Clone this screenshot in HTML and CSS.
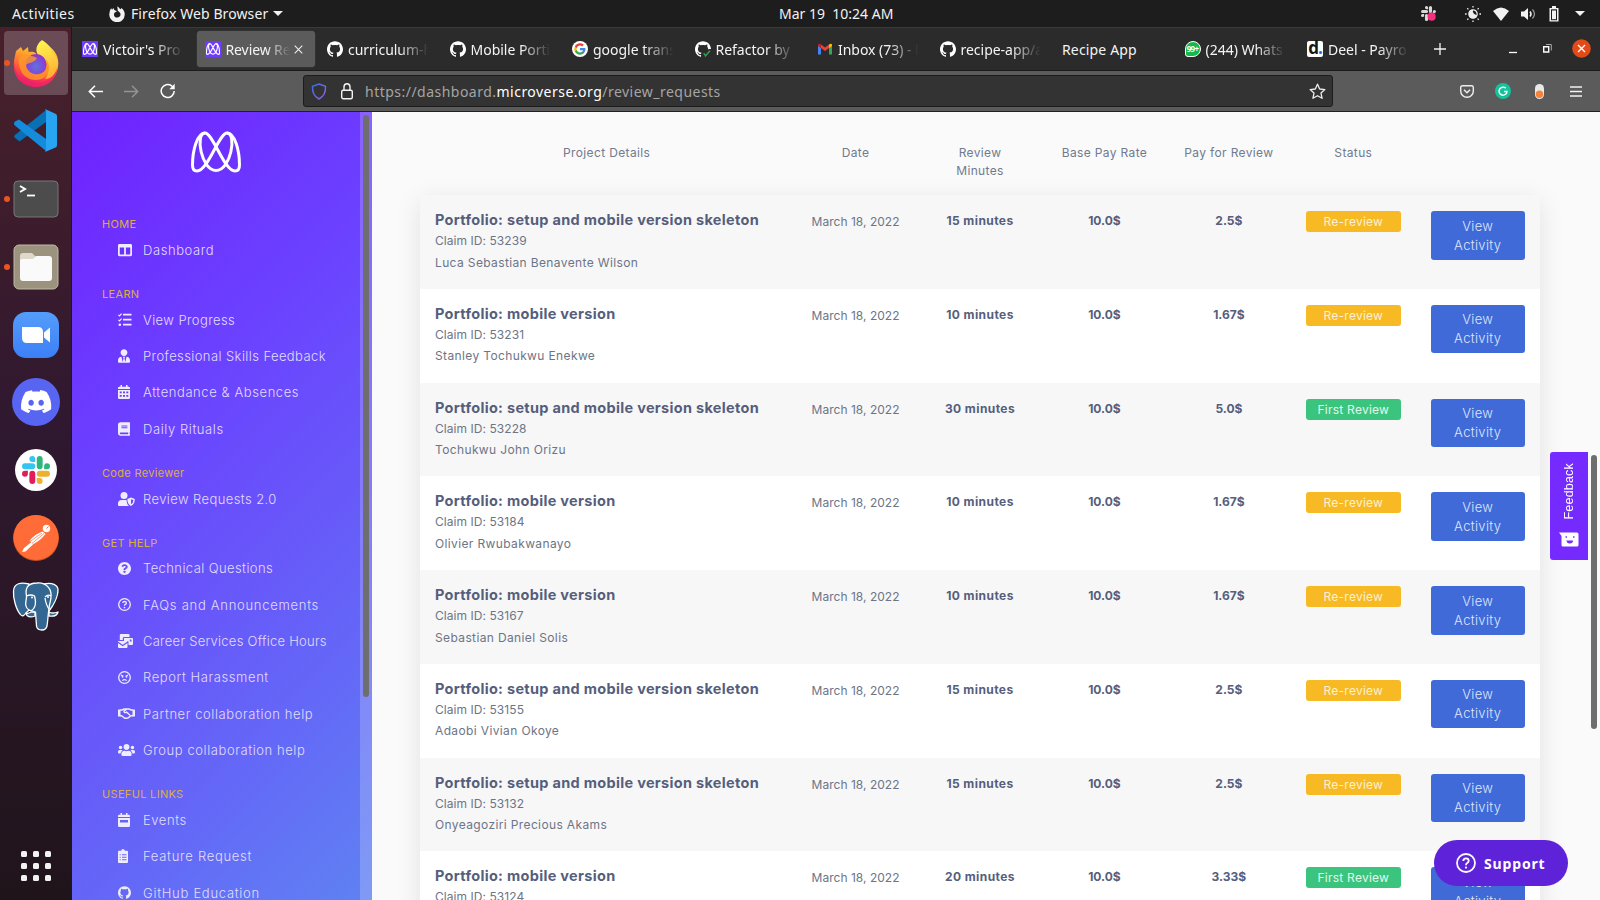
FILE: index.html
```html
<!DOCTYPE html>
<html lang="en">
<head>
<meta charset="utf-8">
<title>Review Requests</title>
<link rel="stylesheet" href="styles.css">
</head>
<body>
<svg class="defs" width="0" height="0">
  <defs>
    <linearGradient id="ffBody" x1="0.7" y1="0" x2="0.4" y2="1"><stop offset="0" stop-color="#fff04a"/><stop offset=".35" stop-color="#ffa62b"/><stop offset=".7" stop-color="#ff4f3d"/><stop offset="1" stop-color="#e4117a"/></linearGradient>
    <linearGradient id="ffFlame" x1="0.5" y1="0" x2="0.7" y2="1"><stop offset="0" stop-color="#fff44f"/><stop offset="1" stop-color="#ffa930"/></linearGradient>
    <radialGradient id="ffGlobe" cx=".5" cy=".6" r=".6"><stop offset="0" stop-color="#6173df"/><stop offset="1" stop-color="#8f31d4"/></radialGradient>
    <linearGradient id="zoomBg" x1="0" y1="0" x2="0" y2="1"><stop offset="0" stop-color="#559dfb"/><stop offset="1" stop-color="#3c7ff6"/></linearGradient>
    <linearGradient id="shieldLine" x1="0" y1="0" x2="1" y2="1"><stop offset="0" stop-color="#3b6fe0"/><stop offset="1" stop-color="#8b62ea"/></linearGradient>
    <symbol id="github" viewBox="0 0 24 24"><path d="M12 .297c-6.63 0-12 5.373-12 12 0 5.303 3.438 9.8 8.205 11.385.6.113.82-.258.82-.577 0-.285-.01-1.04-.015-2.04-3.338.724-4.042-1.61-4.042-1.61C4.422 18.07 3.633 17.7 3.633 17.7c-1.087-.744.084-.729.084-.729 1.205.084 1.838 1.236 1.838 1.236 1.07 1.835 2.809 1.305 3.495.998.108-.776.417-1.305.76-1.605-2.665-.3-5.466-1.332-5.466-5.93 0-1.31.465-2.38 1.235-3.22-.135-.303-.54-1.523.105-3.176 0 0 1.005-.322 3.3 1.23.96-.267 1.98-.399 3-.405 1.02.006 2.04.138 3 .405 2.28-1.552 3.285-1.23 3.285-1.23.645 1.653.24 2.873.12 3.176.765.84 1.23 1.91 1.23 3.22 0 4.61-2.805 5.625-5.475 5.92.42.36.81 1.096.81 2.22 0 1.606-.015 2.896-.015 3.286 0 .315.21.69.825.57C20.565 22.092 24 17.592 24 12.297c0-6.627-5.373-12-12-12"/></symbol>
    <symbol id="mv" viewBox="0 0 50 42"><g fill="none" stroke="#fff"><path d="M1.5 34C1.5 20 6 2 14 2C22 2 33 40 44 40C47.500 40 48.500 38 48.500 34C48.500 20 44 2 36 2C28 2 17 40 6 40C2.500 40 1.500 38 1.500 34Z"/><path d="M14 2C4 2 10 39.500 25 39.500C40 39.500 46 2 36 2"/></g></symbol>
    <symbol id="slackmark" viewBox="0 0 24 24"><g id="slackleg"><path d="M5.042 15.165a2.528 2.528 0 0 1-2.52 2.523A2.528 2.528 0 0 1 0 15.165a2.527 2.527 0 0 1 2.522-2.52h2.52v2.52zM6.313 15.165a2.527 2.527 0 0 1 2.521-2.52 2.527 2.527 0 0 1 2.521 2.52v6.313A2.528 2.528 0 0 1 8.834 24a2.528 2.528 0 0 1-2.521-2.522v-6.313z"/></g></symbol>
  </defs>
</svg>

<header class="topbar">
  <span class="activities">Activities</span>
  <span class="appmenu">
    <svg width="16" height="16" viewBox="0 0 16 16"><path fill="#f2f2f2" fill-rule="evenodd" d="M8 0.300C9.500 1.200 10.500 2 11 3.200C12 2.800 12.300 2.500 12.500 2C15 4 15.800 6 15.700 8.500A7.700 7.500 0 1 1 .5 7C.6 5 1.200 3.500 2.200 2.200L3 3.800L4.500 2L5.300 4L8 5.300L5.500 6.800C4 9.500 6 11.800 8.200 11.600C10.800 11.400 12 9.500 11.300 7.300C10.600 5.500 8.500 5 8.600 3.600C8.600 2.200 8.500 1.500 8 .3Z"/></svg>
    <b class="appname">Firefox Web Browser</b><i class="caret"></i>
  </span>
  <span class="clock">Mar 19&nbsp; 10:24 AM</span>
  <span class="tray">
    <svg class="t-slack" width="15" height="15" viewBox="0 0 24 24"><g fill="#d8d8d8"><use href="#slackleg"/><use href="#slackleg" transform="rotate(90 12 12)"/><use href="#slackleg" transform="rotate(180 12 12)"/></g><circle cx="17" cy="17" r="6.500" fill="#f5317f"/></svg>
    <svg width="16" height="16" viewBox="0 0 16 16"><circle cx="8" cy="8" r="4.200" fill="none" stroke="#eee" stroke-width="1.200"/><path d="M8 3.800A4.200 4.200 0 1 0 12.200 9A4 4 0 0 1 8 3.800Z" fill="#eee"/><path d="M8 0v1.600M8 14.400V16M0 8h1.600M14.400 8H16M2.300 2.300l1.100 1.100M12.600 12.600l1.100 1.100M2.300 13.700l1.100-1.100M12.600 3.400l1.100-1.100" stroke="#eee" stroke-width="1.300"/></svg>
    <svg width="16" height="14" viewBox="0 0 16 14"><path d="M0 4Q8-3 16 4L8 14Z" fill="#f2f2f2"/></svg>
    <svg width="16" height="14" viewBox="0 0 16 14"><path d="M0 4.500h3L7 1v12L3 9.500H0Z" fill="#f2f2f2"/><path d="M9 4.500q2 2.500 0 5" fill="none" stroke="#f2f2f2" stroke-width="1.500"/><path d="M11.500 2.500q4 4.500 0 9" fill="none" stroke="#999" stroke-width="1.300"/></svg>
    <svg width="10" height="16" viewBox="0 0 10 16"><path d="M3 0h4v2h2.500v13.500H.5V2H3Z" fill="#f2f2f2"/><path d="M2 3.300h6v10.900H2Z" fill="#1d1d1d"/><path d="M3 4.500h4v8.700H3Z" fill="#f2f2f2"/></svg>
    <i class="caret"></i>
  </span>
</header>

<div class="desktop">
<nav class="dock">
  <div class="app active running">
    <svg width="46" height="48" viewBox="0 0 46 48"><path fill="url(#ffBody)" d="M3 12C5 11 6 9 8 8L10 12L15 8L15.500 13C21 12 24 14 24 17L28 14C30 8 28 6 30 2C36 6 42 12 44 17C47 25 45 36 37 43C28 50 15 49 7 42C0 35 0 24 2 17Z"/><path fill="url(#ffFlame)" d="M29 1C36 6 38 10 39 14C42 15 44 20 45 22C46 30 41 40 32 40C37 34 37 22 29 19C22 16 21 7 29 1Z"/><circle cx="23" cy="25.500" r="10.500" fill="url(#ffGlobe)"/><path fill="#ff9a28" d="M6 18C12 16 18 16 24 19C22 24 16 23 13 26C14 32 19 36 26 35C34 34 35 26 33 20C40 29 35 41 23 41C11 41 4 30 6 18Z" opacity=".8"/><path d="M1 23C2 40 14 44 24 44C34 44 42 37 44 29C43 43 32 48 23 48C10 48 0 38 1 23Z" fill="#f02367" opacity=".75"/></svg>
  </div>
  <div class="app"><svg width="43" height="43" viewBox="0 0 43 43"><path fill="#0b6fb5" d="M0 28L5.500 32.500L32 13V1L1 26Q0 27 0 28Z"/><path fill="#148bdb" d="M0 15Q0 13 1 12.500L5 10.500L32 30V42L1.500 17Q0 16 0 15Z"/><path fill="#27a4f2" d="M31 0L42 5Q43 6 43 7V36Q43 38 41.500 38.500L31 43Q32 42 32 40V3Q32 1 31 0Z"/></svg></div>
  <div class="app running"><svg width="46" height="38" viewBox="0 0 46 38"><rect x="1" y="1" width="44" height="36" rx="4" fill="#4c4c4c" stroke="#777"/><path d="M7 6l5 3-5 3" fill="none" stroke="#fff" stroke-width="2"/><path d="M14 15.500h8" stroke="#fff" stroke-width="1.800"/></svg></div>
  <div class="app running"><svg width="46" height="46" viewBox="0 0 46 46"><rect x="1" y="1" width="44" height="44" rx="5" fill="#9b937e" stroke="#c0b9a5"/><path d="M7 18V12Q7 9 10 9H19L23 13V18Z" fill="#ddd8ca"/><path d="M7 17Q7 15 9 15H20L23 12H36Q39 12 39 15V34Q39 37 36 37H10Q7 37 7 34Z" fill="#fafafa"/></svg></div>
  <div class="app"><svg width="46" height="46" viewBox="0 0 46 46"><rect width="46" height="46" rx="13" fill="url(#zoomBg)"/><path d="M9 15H25Q30 15 30 20V31H14Q9 31 9 26ZM31 20.500L37 15.500V30.500L31 25.500Z" fill="#fff"/></svg></div>
  <div class="app"><svg width="48" height="48" viewBox="0 0 48 48"><circle cx="24" cy="24" r="24" fill="#5765f2"/><g transform="translate(9 8.500) scale(1.260)" fill="#fff"><path d="M20.317 4.370a19.800 19.800 0 00-4.885-1.515c-.3.400-.55.900-.687 1.287-1.845-.276-3.680-.276-5.487 0-.164-.393-.406-.874-.618-1.250a19.700 19.700 0 00-5.043 1.478C.533 9.046-.319 13.580.099 18.058c2.053 1.508 4.041 2.480 6.108 3.058.462-.63.873-1.295 1.226-1.994-.694-.3-1.316-.6-1.914-.998l.444-.421c3.928 1.793 8.180 1.793 12.139 0l.444.421c-.6.400-1.220.7-1.914 1 .36.697.772 1.362 1.225 1.992 1.961-.578 4.034-1.500 6.087-3.008.5-5.177-.838-9.724-3.627-13.738zM8.020 15.331c-1.183 0-2.157-1.086-2.157-2.419s.956-2.419 2.157-2.419c1.211 0 2.176 1.095 2.157 2.419 0 1.333-.956 2.419-2.157 2.419zm7.975 0c-1.183 0-2.157-1.086-2.157-2.419s.955-2.419 2.157-2.419c1.211 0 2.176 1.095 2.157 2.419 0 1.333-.946 2.419-2.157 2.419Z"/></g></svg></div>
  <div class="app"><svg width="42" height="42" viewBox="0 0 42 42"><circle cx="21" cy="21" r="21" fill="#fff"/><g transform="translate(7 7) scale(1.167)"><use href="#slackleg" fill="#e01e5a"/><use href="#slackleg" fill="#36c5f0" transform="rotate(90 12 12)"/><use href="#slackleg" fill="#2eb67d" transform="rotate(180 12 12)"/><use href="#slackleg" fill="#ecb22e" transform="rotate(270 12 12)"/></g></svg></div>
  <div class="app"><svg width="46" height="46" viewBox="0 0 46 46"><circle cx="23" cy="23" r="23" fill="#c9501f"/><circle cx="23" cy="22.500" r="22.500" fill="#ff6c37"/><circle cx="33.500" cy="13.500" r="3.700" fill="#fff"/><path d="M29.500 16.500L32.500 19Q28 25 20.500 29L12.500 36.500L9 37L11 33L18.500 27L16.500 26Q21 19.500 29.500 16.500Z" fill="#fff"/><path d="M29 18L17 26.500M31 18.500L19 28.500" stroke="#ff6c37" stroke-width=".7"/><path d="M33.500 13.500l2-2" stroke="#ff6c37"/></svg></div>
  <div class="app"><svg width="48" height="50" viewBox="0 0 48 50"><g fill="#336791" stroke="#fff" stroke-width="1.300" stroke-linejoin="round"><path d="M17 3C9 1 2 2 1.500 10C1 17 4 28 8 33C10 36 12 35 14 32L18 28V6Z"/><path d="M32 3C40 1 46 4 46 9C46 16 41 25 37 30L33 24Z"/><path d="M14 32Q16 33 19 31L23 31V35Q18 37 15 34.500Z"/><path d="M37 31Q40 33 46 31Q45 36 37 35Z"/><path d="M17 29C11 25 15 19 14.500 15C13 8 15 2 25 2C34 1 40 8 39 16C39 20 37 23 37 28C36 33 36 39 35 45Q34 49 30 49Q25 49 24.500 45L23.500 31Z"/><path d="M14.500 15Q19 13 22.500 15Q24.500 22 22.500 26Q20 31 17 29M33 16Q36 13 39 15M33 17Q34 24 37 28" fill="none"/></g><circle cx="20" cy="16.500" r="1" fill="#fff"/><circle cx="36" cy="16" r="1" fill="#fff"/></svg></div>
  <div class="grid9"><i></i><i></i><i></i><i></i><i></i><i></i><i></i><i></i><i></i></div>
</nav>

<main class="browser">
  <div class="tabs">
    <div class="tab"><span class="mvico"><svg width="14" height="12"><use href="#mv"/></svg></span><span class="label">Victoir's Pro</span></div>
    <div class="tab current"><span class="mvico"><svg width="14" height="12"><use href="#mv"/></svg></span><span class="label">Review Re</span><svg class="x" width="9" height="9" viewBox="0 0 9 9"><path d="M.7.7l7.600 7.600M8.300.7L.7 8.300" stroke="#eee" stroke-width="1.100"/></svg></div>
    <div class="tab"><svg width="16" height="16" fill="#fff"><use href="#github"/></svg><span class="label">curriculum-h</span></div>
    <div class="tab"><svg width="16" height="16" fill="#fff"><use href="#github"/></svg><span class="label">Mobile Porti</span></div>
    <div class="tab"><svg width="16" height="16" viewBox="0 0 24 24"><circle cx="12" cy="12" r="12" fill="#fff"/><g transform="translate(2.600 2.600) scale(.78)"><path fill="#4285f4" d="M22.560 12.250c0-.78-.07-1.530-.2-2.250H12v4.260h5.920c-.26 1.370-1.040 2.530-2.210 3.310v2.770h3.570c2.080-1.920 3.280-4.740 3.280-8.090z"/><path fill="#34a853" d="M12 23c2.970 0 5.460-.98 7.280-2.660l-3.570-2.770c-.98.66-2.230 1.060-3.710 1.060-2.860 0-5.290-1.930-6.160-4.530H2.180v2.840C3.990 20.530 7.700 23 12 23z"/><path fill="#fbbc05" d="M5.840 14.090c-.22-.66-.35-1.360-.35-2.090s.13-1.430.35-2.090V7.070H2.180C1.430 8.550 1 10.220 1 12s.43 3.450 1.180 4.930l2.850-2.220.81-.62z"/><path fill="#ea4335" d="M12 5.380c1.620 0 3.060.56 4.210 1.640l3.150-3.150C17.450 2.090 14.970 1 12 1 7.700 1 3.990 3.470 2.180 7.070l3.660 2.840c.87-2.600 3.300-4.530 6.160-4.530z"/></g></svg><span class="label">google trans</span></div>
    <div class="tab"><svg width="16" height="16" viewBox="0 0 24 24"><use href="#github" width="24" height="24" fill="#fff"/><path d="M11 17l5 7h8V12h-3Z" fill="#2b2b2b"/><path d="M13 18.500l3 3.500 6.500-7.500" fill="none" stroke="#2da44e" stroke-width="2.200"/></svg><span class="label">Refactor by</span></div>
    <div class="tab"><svg width="16" height="16" viewBox="0 0 16 16"><path d="M1 13.500V4.500l3 2.200v6.800Z" fill="#4285f4"/><path d="M15 13.500V4.500l-3 2.200v6.800Z" fill="#34a853"/><path d="M4 3.500l4 3 4-3v3.600l-4 3-4-3Z" fill="#ea4335"/><path d="M1 5V3.500Q2 1.800 4 3.500v3.700Z" fill="#c5221f"/><path d="M15 5V3.500Q14 1.800 12 3.500v3.700Z" fill="#fbbc04"/></svg><span class="label">Inbox (73) - l</span></div>
    <div class="tab"><svg width="16" height="16" fill="#fff"><use href="#github"/></svg><span class="label">recipe-app/a</span></div>
    <div class="tab"><span class="label">Recipe App</span></div>
    <div class="tab"><span class="wa">99+</span><span class="label">(244) Whats</span></div>
    <div class="tab"><span class="deel">d<i>.</i></span><span class="label">Deel - Payro</span></div>
    <svg class="plus" width="12" height="12" viewBox="0 0 12 12"><path d="M6 0v12M0 6h12" stroke="#f4f4f4" stroke-width="1.300"/></svg>
    <div class="winctl">
      <svg width="8" height="10" viewBox="0 0 8 10"><path d="M0 8.500h8" stroke="#fff" stroke-width="1.300"/></svg>
      <svg width="9" height="9" viewBox="0 0 9 9"><path d="M.7 2.700h5v5.300h-5Z" fill="none" stroke="#fff" stroke-width="1.400"/><path d="M3 .5h5.300v6" fill="none" stroke="#aaa"/></svg>
      <svg width="19" height="19" viewBox="0 0 19 19"><circle cx="9.500" cy="9.500" r="9.300" fill="#e44a17"/><path d="M6 6l7 7M13 6l-7 7" stroke="#fff" stroke-width="1.400"/></svg>
    </div>
  </div>
  <div class="toolbar">
    <div class="navbtns">
      <svg width="15" height="13" viewBox="0 0 15 13"><path d="M7 .8L1.300 6.500 7 12.200M1.300 6.500H15" fill="none" stroke="#fff" stroke-width="1.500"/></svg>
      <svg width="15" height="13" viewBox="0 0 15 13"><path d="M8 .8l5.700 5.700L8 12.200M13.700 6.500H0" fill="none" stroke="#949494" stroke-width="1.500"/></svg>
      <svg width="16" height="16" viewBox="0 0 16 16"><path d="M14.200 8A6.500 6.500 0 1 1 11.600 2.800L13 4" fill="none" stroke="#fff" stroke-width="1.500"/><path d="M14.700.8v5.400H9.300Z" fill="#fff"/></svg>
    </div>
    <div class="urlbar">
      <svg width="16" height="17" viewBox="0 0 16 17"><path d="M8 1L14.500 3.400C14.800 9 13 13.500 8 16C3 13.500 1.200 9 1.500 3.400Z" fill="none" stroke="url(#shieldLine)" stroke-width="1.500"/></svg>
      <svg class="lock" width="12" height="17" viewBox="0 0 12 17"><rect x=".7" y="7.200" width="10.600" height="8.600" rx="1.500" fill="none" stroke="#f4f4f4" stroke-width="1.400"/><path d="M3 7V4Q3 .8 6 .8T9 4v3" fill="none" stroke="#f4f4f4" stroke-width="1.400"/></svg>
      <span class="url">https://dashboard.<b>microverse.org</b>/review_requests</span>
      <svg class="star" width="17" height="17" viewBox="0 0 17 17"><path d="M8.500 1.200l2.200 4.800 5.200.6-3.900 3.500 1.100 5.200-4.600-2.600-4.600 2.600L5 10.100 1.100 6.600l5.200-.6Z" fill="none" stroke="#eee" stroke-width="1.300" stroke-linejoin="round"/></svg>
    </div>
    <div class="exts">
      <svg width="14" height="13" viewBox="0 0 14 13"><path d="M2.500.8h9Q13.300.8 13.300 2.500V6A6.300 6.300 0 0 1 .7 6V2.500Q.7.8 2.500.8Z" fill="none" stroke="#eee" stroke-width="1.400"/><path d="M4 4.700l3 3 3-3" fill="none" stroke="#eee" stroke-width="1.500"/></svg>
      <svg width="16" height="16" viewBox="0 0 16 16"><circle cx="8" cy="8" r="8" fill="#15c39a"/><path d="M10.800 5.300A4 4 0 1 0 12 8.500H9" fill="none" stroke="#fff" stroke-width="1.400"/></svg>
      <svg width="9" height="15" viewBox="0 0 9 15"><rect width="9" height="15" rx="4.500" fill="#e9e9e9"/><circle cx="4.500" cy="10.300" r="3.700" fill="#f5833a"/></svg>
      <svg width="12" height="11" viewBox="0 0 12 11"><path d="M0 1h12M0 5.500h12M0 10h12" stroke="#f2f2f2" stroke-width="1.300"/></svg>
    </div>
  </div>

  <div class="page">
    <aside class="sidebar">
      <div class="menu">
        <svg class="logo" width="50" height="42"><use href="#mv"/></svg>
        <section><h4>HOME</h4>
          <a><svg width="14" height="14" viewBox="0 0 512 512"><path d="M464 32H48C21.490 32 0 53.490 0 80v352c0 26.510 21.490 48 48 48h416c26.510 0 48-21.490 48-48V80c0-26.510-21.490-48-48-48zM224 416H64V160h160v256zm224 0H288V160h160v256z"/></svg>Dashboard</a></section>
        <section><h4>LEARN</h4>
          <a class="snug"><svg width="14" height="14" viewBox="0 0 14 14"><path d="M5 1.700h8.500M5 6.700h8.500M5 11.700h8.500" stroke="#f0ecff" stroke-width="1.700"/><path d="M.4 1.900l1.100 1L3.600.6M.4 6.900l1.100 1 2.100-2.300" fill="none" stroke="#f0ecff" stroke-width="1.200"/><circle cx="1.800" cy="11.700" r="1.300"/></svg>View Progress</a>
          <a class="snug"><svg width="12" height="14" viewBox="0 0 448 512"><path d="M224 256c70.700 0 128-57.300 128-128S294.700 0 224 0 96 57.300 96 128s57.300 128 128 128zm95.800 32.600L272 480l-32-136 32-56h-96l32 56-32 136-47.800-191.400C56.900 292 0 350.300 0 422.400V464c0 26.500 21.500 48 48 48h352c26.500 0 48-21.500 48-48v-41.600c0-72.100-56.900-130.400-128.200-133.800z"/></svg>Professional Skills Feedback</a>
          <a><svg width="12" height="14" viewBox="0 0 12 14"><path d="M0 4V3Q0 1.700 1.300 1.700H2.500V0H4v1.700h4V0h1.500v1.700h1.200Q12 1.700 12 3v1Z"/><path fill-rule="evenodd" d="M0 5h12v7.700Q12 14 10.700 14H1.300Q0 14 0 12.700ZM1.700 6.500v1.800h2V6.500ZM5 6.500v1.800h2V6.500ZM8.300 6.500v1.800h2V6.500ZM1.700 10v1.800h2V10ZM5 10v1.800h2V10ZM8.300 10v1.800h2V10Z"/></svg>Attendance &amp; Absences</a>
          <a><svg width="12" height="14" viewBox="0 0 448 512"><path d="M448 360V24c0-13.300-10.700-24-24-24H96C43 0 0 43 0 96v320c0 53 43 96 96 96h328c13.300 0 24-10.700 24-24v-16c0-7.500-3.500-14.300-8.900-18.700-4.200-15.400-4.200-59.300 0-74.700 5.400-4.300 8.900-11.100 8.900-18.600zM128 134c0-3.300 2.700-6 6-6h212c3.300 0 6 2.700 6 6v20c0 3.300-2.700 6-6 6H134c-3.300 0-6-2.700-6-6v-20zm0 64c0-3.300 2.700-6 6-6h212c3.300 0 6 2.700 6 6v20c0 3.300-2.700 6-6 6H134c-3.300 0-6-2.700-6-6v-20zm253.400 250H96c-17.700 0-32-14.300-32-32 0-17.600 14.400-32 32-32h285.400c-1.900 17.100-1.900 46.900 0 64z"/></svg>Daily Rituals</a></section>
        <section><h4>Code Reviewer</h4>
          <a class="snug"><svg width="17" height="14" viewBox="0 0 17 14"><circle cx="6" cy="3.500" r="3.500"/><path d="M0 13V11.500Q0 8 3.500 8H8.500L9 11Q9.500 13 11 14H1Q0 14 0 13Z"/><path d="M13 5.500L16.800 7Q17 12 13 14Q9.200 12 9.300 7ZM13 7.200V12.300Q15.300 11 15.400 8Z" fill-rule="evenodd"/></svg>Review Requests 2.0</a></section>
        <section><h4>GET HELP</h4>
          <a class="snug"><svg width="13" height="13" viewBox="8 8 496 496"><path d="M504 256c0 136.997-111.043 248-248 248S8 392.997 8 256C8 119.083 119.043 8 256 8s248 111.083 248 248zM262.655 90c-54.497 0-89.255 22.957-116.549 63.758-3.536 5.286-2.353 12.415 2.715 16.258l34.699 26.310c5.205 3.947 12.621 3.008 16.665-2.122 17.864-22.658 30.113-35.797 57.303-35.797 20.429 0 45.698 13.148 45.698 32.958 0 14.976-12.363 22.667-32.534 33.976C247.128 238.528 216 254.941 216 296v4c0 6.627 5.373 12 12 12h56c6.627 0 12-5.373 12-12v-1.333c0-28.462 83.186-29.647 83.186-106.667 0-58.002-60.165-102-116.531-102zM256 338c-25.365 0-46 20.635-46 46 0 25.364 20.635 46 46 46s46-20.636 46-46c0-25.365-20.635-46-46-46z"/></svg>Technical Questions</a>
          <a class="wide"><svg width="13" height="13" viewBox="0 0 13 13"><circle cx="6.500" cy="6.500" r="5.800" fill="none" stroke="#f0ecff" stroke-width="1.300"/><path d="M4.700 4.900Q5 3.500 6.600 3.500T8.400 5Q8.400 5.900 7.400 6.300T6.500 7.700" fill="none" stroke="#f0ecff" stroke-width="1.300"/><circle cx="6.500" cy="9.500" r=".85"/></svg>FAQs and Announcements</a>
          <a class="tight"><svg width="15" height="14" viewBox="0 0 15 14"><path d="M1.800 6V1Q1.800 0 2.800 0H10.500Q11.500 0 11.500 1V3H6Q4.800 3 4.800 4.200V6Z"/><path fill-rule="evenodd" d="M6 4H14Q15 4 15 5V10Q15 11 14 11H10.500V8Q10.500 7 9.500 7H6ZM11.800 5.500V7.500H13.500V5.500Z"/><path d="M0 7.500L4.700 10.700L9.500 7.500V7H0ZM0 9V13Q0 14 1 14H8.500Q9.500 14 9.500 13V9L4.700 12.200Z"/></svg>Career Services Office Hours</a>
          <a><svg width="13" height="13" viewBox="0 0 13 13"><circle cx="6.500" cy="6.500" r="5.800" fill="none" stroke="#f0ecff" stroke-width="1.300"/><path d="M2.900 4l2.500 1.200M10.100 4L7.600 5.200M4.300 9.700Q6.500 7.500 8.700 9.700" fill="none" stroke="#f0ecff" stroke-width="1.200"/><circle cx="4.500" cy="5.800" r=".9"/><circle cx="8.500" cy="5.800" r=".9"/></svg>Report Harassment</a>
          <a><svg width="17" height="11" viewBox="0 0 17 11"><path d="M0 1.500H2.500V8.500H0ZM14.500 1.500H17V8.500H14.500Z"/><path d="M2 2H4L6 1H11L13.200 2H15M2 7.700H3.500L6.500 10Q9 10.700 10.500 9.600L13 7.700H15M9 1L6 3.200Q6 5.500 8.700 4.200L12 7.200" fill="none" stroke="#f0ecff" stroke-width="1.400"/></svg>Partner collaboration help</a>
          <a><svg width="17" height="14" viewBox="0 0 640 512"><path d="M96 224c35.300 0 64-28.700 64-64s-28.700-64-64-64-64 28.700-64 64 28.700 64 64 64zm448 0c35.300 0 64-28.700 64-64s-28.700-64-64-64-64 28.700-64 64 28.700 64 64 64zm32 32h-64c-17.600 0-33.500 7.100-45.100 18.600 40.300 22.100 68.900 62 75.100 109.400h66c17.700 0 32-14.300 32-32v-32c0-35.300-28.700-64-64-64zm-256 0c61.900 0 112-50.100 112-112S381.900 32 320 32 208 82.100 208 144s50.100 112 112 112zm76.800 32h-8.300c-20.800 10-43.900 16-68.500 16s-47.600-6-68.500-16h-8.300C179.600 288 128 339.600 128 403.200V432c0 26.500 21.500 48 48 48h288c26.500 0 48-21.500 48-48v-28.800c0-63.600-51.600-115.200-115.200-115.200zm-223.700-13.400C161.500 263.100 145.600 256 128 256H64c-35.300 0-64 28.700-64 64v32c0 17.700 14.300 32 32 32h65.900c6.300-47.400 34.900-87.300 75.200-109.400z"/></svg>Group collaboration help</a></section>
        <section><h4>USEFUL LINKS</h4>
          <a><svg width="12" height="14" viewBox="0 0 12 14"><path d="M0 4V3Q0 1.700 1.300 1.700H2.500V0H4v1.700h4V0h1.500v1.700h1.200Q12 1.700 12 3v1Z"/><path fill-rule="evenodd" d="M0 5h12v7.700Q12 14 10.700 14H1.300Q0 14 0 12.700ZM2 7V9.500H10V7Z"/></svg>Events</a>
          <a class="wide"><svg width="10" height="14" viewBox="0 0 10 14"><path fill-rule="evenodd" d="M1 1.700H3.200Q3.500 0 5 0T6.800 1.700H9Q10 1.700 10 2.700V13Q10 14 9 14H1Q0 14 0 13V2.700Q0 1.700 1 1.700ZM1.700 5.300V6.300H2.700V5.300ZM4 5.300V6.300H8.500V5.300ZM1.700 7.800V8.800H2.700V7.800ZM4 7.800V8.800H8.500V7.800ZM1.700 10.300V11.300H2.700V10.300ZM4 10.300V11.300H8.500V10.300Z"/></svg>Feature Request</a>
          <a class="wide"><svg width="13" height="13"><use href="#github"/></svg>GitHub Education</a></section>
      </div>
      <div class="track"><i></i></div>
    </aside>

    <div class="content">
      <div class="thead"><span>Project Details</span><span>Date</span><span>Review<br>Minutes</span><span>Base Pay Rate</span><span>Pay for Review</span><span>Status</span><span></span></div>
      <div class="card">
        <div class="row"><div class="proj"><h3>Portfolio: setup and mobile version skeleton</h3><p>Claim ID: 53239</p><p class="student">Luca Sebastian Benavente Wilson</p></div><span class="date">March 18, 2022</span><b class="mins">15 minutes</b><b>10.0$</b><b>2.5$</b><div class="cell"><span class="badge">Re-review</span></div><div class="cell"><a class="btn">View Activity</a></div></div>
        <div class="row"><div class="proj"><h3>Portfolio: mobile version</h3><p>Claim ID: 53231</p><p class="student">Stanley Tochukwu Enekwe</p></div><span class="date">March 18, 2022</span><b class="mins">10 minutes</b><b>10.0$</b><b>1.67$</b><div class="cell"><span class="badge">Re-review</span></div><div class="cell"><a class="btn">View Activity</a></div></div>
        <div class="row"><div class="proj"><h3>Portfolio: setup and mobile version skeleton</h3><p>Claim ID: 53228</p><p class="student">Tochukwu John Orizu</p></div><span class="date">March 18, 2022</span><b class="mins">30 minutes</b><b>10.0$</b><b>5.0$</b><div class="cell"><span class="badge first">First Review</span></div><div class="cell"><a class="btn">View Activity</a></div></div>
        <div class="row"><div class="proj"><h3>Portfolio: mobile version</h3><p>Claim ID: 53184</p><p class="student">Olivier Rwubakwanayo</p></div><span class="date">March 18, 2022</span><b class="mins">10 minutes</b><b>10.0$</b><b>1.67$</b><div class="cell"><span class="badge">Re-review</span></div><div class="cell"><a class="btn">View Activity</a></div></div>
        <div class="row"><div class="proj"><h3>Portfolio: mobile version</h3><p>Claim ID: 53167</p><p class="student">Sebastian Daniel Solis</p></div><span class="date">March 18, 2022</span><b class="mins">10 minutes</b><b>10.0$</b><b>1.67$</b><div class="cell"><span class="badge">Re-review</span></div><div class="cell"><a class="btn">View Activity</a></div></div>
        <div class="row"><div class="proj"><h3>Portfolio: setup and mobile version skeleton</h3><p>Claim ID: 53155</p><p class="student">Adaobi Vivian Okoye</p></div><span class="date">March 18, 2022</span><b class="mins">15 minutes</b><b>10.0$</b><b>2.5$</b><div class="cell"><span class="badge">Re-review</span></div><div class="cell"><a class="btn">View Activity</a></div></div>
        <div class="row"><div class="proj"><h3>Portfolio: setup and mobile version skeleton</h3><p>Claim ID: 53132</p><p class="student">Onyeagoziri Precious Akams</p></div><span class="date">March 18, 2022</span><b class="mins">15 minutes</b><b>10.0$</b><b>2.5$</b><div class="cell"><span class="badge">Re-review</span></div><div class="cell"><a class="btn">View Activity</a></div></div>
        <div class="row"><div class="proj"><h3>Portfolio: mobile version</h3><p>Claim ID: 53124</p></div><span class="date">March 18, 2022</span><b class="mins">20 minutes</b><b>10.0$</b><b>3.33$</b><div class="cell"><span class="badge first">First Review</span></div><div class="cell"><a class="btn">View Activity</a></div></div>
      </div>
    </div>
    <div class="feedback"><span>Feedback</span><svg width="20" height="15" viewBox="0 0 20 15"><path d="M0 .5H18Q19.500.5 19.500 2V13Q19.500 14.500 18 14.500H4Q2.500 14.500 2.500 13V4Z" fill="#fff"/><path d="M6.500 5h1.500M14 5h1.500" stroke="#752bff" stroke-width="1.500"/><path d="M7.500 8.500H14Q14 11.500 10.800 11.500T7.500 8.500Z" fill="#752bff"/></svg></div>
    <i class="scroll"></i>
    <div class="support"><svg width="20" height="20" viewBox="0 0 20 20"><circle cx="10" cy="10" r="9" fill="none" stroke="#fff" stroke-width="1.800"/><path d="M7.300 8Q7.300 5.300 10 5.300T12.700 7.800Q12.700 9.200 11.300 10T10 12.200" fill="none" stroke="#fff" stroke-width="1.800"/><circle cx="10" cy="14.600" r="1.100" fill="#fff"/></svg><span>Support</span></div>
  </div>
</main>
</div>
</body>
</html>
```
FILE: styles.css
```css
* { box-sizing: border-box; }
body { margin: 0; width: 1600px; height: 900px; overflow: hidden; background: #fafafa; font-family: "Noto Sans", "Open Sans", sans-serif; display: flex; flex-direction: column; }
svg { display: block; flex: none; }
.defs { position: absolute; }
b { font-weight: inherit; }
h3, h4, p { margin: 0; }

/* GNOME top bar */
.topbar { height: 27px; flex: none; background: #1d1d1d; color: #f2f2f2; display: grid; grid-template-columns: 12px 97px 1fr 1fr; align-items: center; font-size: 14px; position: relative; line-height: 27px; white-space: nowrap; }
.activities { grid-column: 2; letter-spacing: .42px; }
.appmenu { display: flex; align-items: center; }
.appname { margin-left: 6px; letter-spacing: .1px; }
.caret { border: 5px solid transparent; border-top-color: #f2f2f2; border-bottom: 0; margin-left: 5px; }
.clock { position: absolute; left: 779px; top: 0; letter-spacing: 0; }
.tray { display: flex; align-items: center; justify-content: flex-end; gap: 12px; padding-right: 15px; }
.tray .caret { margin-left: 4px; }
.t-slack { margin-right: 17px; }

.desktop { flex: 1; display: flex; min-height: 0; }

/* Dock */
.dock { width: 72px; flex: none; background: linear-gradient(#48202b 0, #3c1c2c 24%, #2f1830 46%, #2b1727 65%, #20141b 100%); display: flex; flex-direction: column; align-items: center; padding-top: 3px; border-right: 1px solid #241420; }
.app { width: 64px; height: 64px; margin: 1px 0 2.900px; border-radius: 4px; display: flex; align-items: center; justify-content: center; position: relative; flex: none; }
.active { background: rgba(255,255,255,.2); }
.running::before { content: ""; position: absolute; left: 0; top: 29px; width: 6px; height: 6px; border-radius: 50%; background: #e95420; }
.grid9 { margin-top: auto; margin-bottom: 19px; display: grid; grid-template-columns: repeat(3, 6px); gap: 6px; }
.grid9 i { width: 6px; height: 6px; border-radius: 1.500px; background: #f2f2f2; }

/* Browser chrome */
.browser { flex: 1; min-width: 0; display: flex; flex-direction: column; }
.tabs { height: 44px; flex: none; background: #2b2b2b; border-top: 1px solid #3b3b3b; border-bottom: 1px solid #1b1b1b; display: flex; align-items: center; padding-left: 2px; color: #f4f4f4; }
.tab { width: 118.500px; height: 36px; margin-right: 4px; padding-left: 8px; display: flex; align-items: center; flex: none; border-radius: 4px; font-size: 14px; }
.current { background: #5b5b5b; box-shadow: 0 0 1px #777; }
.tab .label { margin-left: 5px; flex: 1; margin-right: 6px; white-space: nowrap; letter-spacing: -.02px; -webkit-mask-image: linear-gradient(90deg, #000 60%, transparent 96%); mask-image: linear-gradient(90deg, #000 60%, transparent 96%); }
.tab .label:first-child { margin-left: 0; letter-spacing: .15px; -webkit-mask-image: none; mask-image: none; }
.tab.current .label { margin-right: 0; letter-spacing: -.1px; }
.x { margin: 0 12px 0 1px; }
.mvico { width: 16px; height: 16px; background: #6f3bff; display: flex; align-items: center; justify-content: center; }
.mvico svg { stroke-width: 4px; }
.wa { width: 16px; height: 16px; border-radius: 50% 50% 50% 3px; background: #13b94b; border: 1px solid #fff; font: bold 8px/14px "Open Sans", sans-serif; letter-spacing: -.8px; text-align: center; color: #fff; }
.deel { width: 16px; height: 16px; background: #fff; border-radius: 2px; color: #161616; font: bold 17px/14px "Open Sans", sans-serif; letter-spacing: -1px; text-align: center; }
.deel i { color: #2b6cf6; font-style: normal; }
.plus { margin: 0 0 0 12px; }
.winctl { margin-left: auto; margin-right: 9px; display: flex; align-items: center; gap: 26px; padding-bottom: 1px; }
.winctl svg:last-child { margin-left: -6px; }
.toolbar { height: 41px; flex: none; background: #5b5b5b; border-bottom: 1px solid #202020; display: flex; align-items: center; }
.navbtns { display: flex; align-items: center; gap: 21px; padding-left: 16px; width: 231px; }
.urlbar { width: 1030px; height: 32px; background: #333; border: 1px solid #1c1c1c; border-radius: 3px; display: flex; align-items: center; padding: 0 6px 0 7px; }
.lock { margin-left: 14px; margin-right: 12px; }
.url { flex: 1; font-size: 14px; color: #a5a5a5; letter-spacing: .48px; }
.url b { color: #fff; }
.exts { margin-left: auto; padding-right: 18px; display: flex; align-items: center; gap: 21px; }
.exts svg:nth-child(3) { margin: 0 5px 0 3px; }

/* Page */
.page { flex: 1; min-height: 0; display: flex; position: relative; overflow: hidden; background: #fafafa; font-family: Inter, "Open Sans", sans-serif; }
.sidebar { width: 300px; flex: none; display: flex; background: linear-gradient(135deg, #6f22ff 0, #6b42ff 36%, #675af9 61%, #6467f7 75%, #5f82f3 100%); }
.menu { width: 288px; padding-left: 30px; }
.logo { margin: 19px 0 0 89px; stroke-width: 3px; }
.menu section { margin-bottom: 18.800px; }
.logo + section { margin-top: 44px; }
h4 { font-size: 11px; line-height: 14.600px; font-weight: 400; color: #dcb03c; letter-spacing: .32px; }
.menu a { height: 36.400px; margin-left: 16px; display: grid; grid-template-columns: 25px auto; justify-content: start; align-items: center; font-size: 13px; font-weight: 300; color: #e2dcff; fill: #f0ecff; letter-spacing: .58px; white-space: nowrap; }
.menu a.tight { letter-spacing: .25px; }
.menu a.snug { letter-spacing: .41px; }
.menu a.wide { letter-spacing: .72px; }
.track { width: 12px; background: rgba(255,255,255,.2); padding: 3px 3px 0; }
.track i { display: block; width: 6px; height: 582px; border-radius: 3px; background: #6e6e6e; }

.content { width: 1120px; margin-left: 48px; color: #6c7587; }
.thead, .row { display: grid; grid-template-columns: 3fr repeat(6, 1fr); }
.thead { height: 83px; padding-top: 32px; font-size: 12px; line-height: 18px; text-align: center; color: #717a8e; letter-spacing: .36px; }
.card { border-radius: 6px; box-shadow: 0 6px 26px rgba(0,0,0,.1); background: #fff; }
.row { height: 93.750px; padding-top: 16px; text-align: center; }
.row:nth-child(odd) { background: #f7f7f7; }
.row:first-child { border-radius: 6px 6px 0 0; }
.proj { padding-left: 15px; text-align: left; white-space: nowrap; margin-top: -1px; }
h3 { font-size: 14.500px; line-height: 20px; font-weight: 700; color: #555e7c; letter-spacing: .31px; }
.proj p { font-size: 12px; line-height: 21.500px; letter-spacing: .06px; }
.proj .student { letter-spacing: .37px; }
.date { font-size: 12px; line-height: 21px; letter-spacing: .02px; }
.row b { font-size: 12px; line-height: 19px; font-weight: 700; color: #555e7c; }
.row .mins { letter-spacing: .42px; }
.cell { padding: 0 15px; }
.badge { display: block; height: 21px; line-height: 21px; border-radius: 3px; background: #f7b924; color: #fdf1cf; font-size: 12px; letter-spacing: .25px; white-space: nowrap; }
.first { background: #3ac47d; color: #e2f9ec; }
.btn { display: block; height: 48.500px; padding: 5.500px 18px 0; border-radius: 3px; background: #3f6ad8; color: #dfe6fa; font-size: 13px; line-height: 19px; font-weight: 300; letter-spacing: .35px; }

.feedback { position: absolute; left: 1478px; top: 340px; width: 38px; height: 108px; background: #752bff; border-radius: 3px 0 0 3px; display: flex; flex-direction: column; align-items: center; justify-content: space-between; padding: 11px 0 13px; color: #fff; font: 12.500px/16px "Liberation Sans", Arial, sans-serif; }
.feedback span { writing-mode: vertical-rl; transform: rotate(180deg); letter-spacing: .2px; }
.scroll { position: absolute; left: 1519px; top: 343px; width: 6px; height: 274px; border-radius: 3px; background: #6e6e6e; }
.support { position: absolute; left: 1362px; top: 728px; width: 134px; height: 46px; border-radius: 23px; background: #5e22d9; color: #fff; display: flex; align-items: center; padding-left: 22px; gap: 8px; font: bold 14px/20px "Noto Sans", "Open Sans", sans-serif; letter-spacing: .85px; }
.support span { padding-top: 1px; }
```
